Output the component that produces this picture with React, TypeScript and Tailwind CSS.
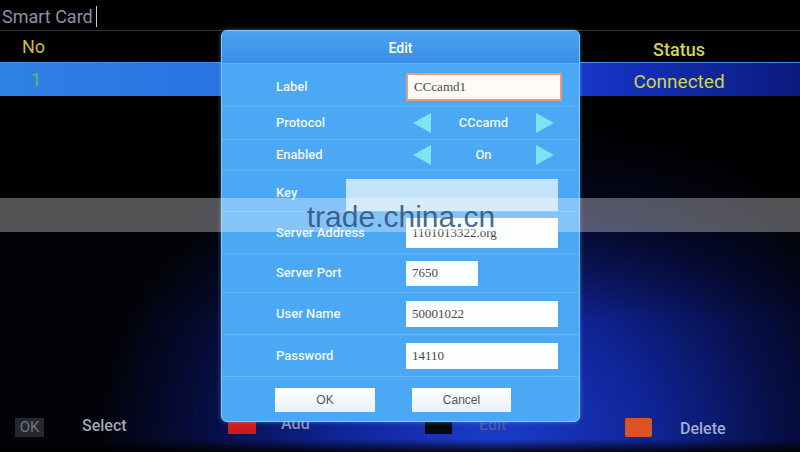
import React from "react";

function Field({ label, value, width = 152, height = 26, labelW = 130, rowH, focused = false }: { label: string; value?: string; width?: number; height?: number; labelW?: number; rowH: string; focused?: boolean }) {
  return (
    <div className={`flex items-center border-b border-[#66b7f7] pl-[54px] ${rowH}`}>
      <div className="shrink-0 text-[13px] font-medium text-[#eef6ff]" style={{ width: labelW }}>
        {label}
      </div>
      <div
        className={`flex items-center pl-[6px] font-['Liberation_Serif',serif] text-[13px] text-[#4a4a4a] ${
          focused ? "border-2 border-[#e99a78] bg-[#fffaf7]" : "bg-[#fbfdff]"
        }`}
        style={{ width, height }}
      >
        {value}
      </div>
    </div>
  );
}

function Spinner({ label, value, rowH }: { label: string; value: string; rowH: string }) {
  return (
    <div className={`flex items-center border-b border-[#66b7f7] pl-[54px] ${rowH}`}>
      <div className="w-[137px] shrink-0 text-[13px] font-medium text-[#eef6ff]">{label}</div>
      <div className="flex w-[141px] items-center justify-between">
        <svg width="18" height="20" viewBox="0 0 18 20">
          <polygon points="18,0 0,10 18,20" fill="#7fe3f3" />
        </svg>
        <span className="text-[13px] font-medium text-[#eef6ff]">{value}</span>
        <svg width="18" height="20" viewBox="0 0 18 20">
          <polygon points="0,0 18,10 0,20" fill="#7fe3f3" />
        </svg>
      </div>
    </div>
  );
}

export default function App() {
  return (
    <div className="relative h-[452px] w-[800px] overflow-hidden bg-[radial-gradient(ellipse_50%_80%_at_62%_100%,#1c3dce_0%,#0f2496_40%,#070e44_72%,#020308_100%)] font-['Roboto',sans-serif]">
      <div className="flex h-full flex-col">
        <div className="flex h-[30px] items-center bg-black pl-[2px] pt-[3px]">
          <span className="text-[18px] leading-none text-[#8a91a6]">Smart Card</span>
          <span className="ml-[3px] h-[21px] w-[1px] bg-[#c8ccd6]" />
        </div>
        <div className="h-[1px] bg-[#303036]" />
        <div className="flex h-[31px] items-center bg-black">
          <div className="w-[558px] pl-[22px] text-[18px] text-[#cbbd47]">No</div>
          <div className="flex-1 pt-[5px] text-center text-[18px] font-medium text-[#d6d152]">Status</div>
        </div>
        <div className="flex h-[34px] items-center border-t border-[#4d8ce8] bg-[linear-gradient(90deg,#2f81e5_0%,#2a72e2_28%,#1f52d5_58%,#1535c6_74%,#0c1a7c_100%)]">
          <div className="w-[558px] pl-[31px] text-[18px] text-[#5cc04c]">1</div>
          <div className="flex-1 pt-[6px] text-center text-[19px] text-[#cfd44e]">Connected</div>
        </div>
        <div className="flex-1 bg-[linear-gradient(180deg,#000_0%,rgba(0,0,0,0.6)_30%,rgba(0,0,0,0)_70%)]" />
        <div className="flex h-[24px] items-center">
          <div className="flex w-[228px] items-center">
            <div className="ml-[15px] flex h-[19px] w-[29px] items-center justify-center bg-[#27282e] text-[15px] text-[#6f7383]">OK</div>
            <span className="mb-[2px] ml-[38px] text-[16px] font-medium text-[#a1a7b8]">Select</span>
          </div>
          <div className="flex w-[197px] items-center">
            <div className="mb-[2px] h-[15px] w-[28px] bg-[#d01a1a]" />
            <span className="mb-[6px] ml-[25px] text-[16px] font-medium text-[#8c94ba]">Add</span>
          </div>
          <div className="flex w-[200px] items-center">
            <div className="h-[13px] w-[27px] bg-[#03080a]" />
            <span className="mb-[4px] ml-[27px] text-[16px] font-medium text-[#4a5aa2]">Edit</span>
          </div>
          <div className="flex items-center">
            <div className="h-[19px] w-[27px] rounded-[2px] bg-[#d95422]" />
            <span className="mt-[4px] ml-[28px] text-[16px] font-medium text-[#a3abd2]">Delete</span>
          </div>
        </div>
        <div className="h-[13px] bg-[linear-gradient(180deg,rgba(0,0,0,0)_0%,rgba(0,0,0,0.85)_100%)]" />
      </div>

      {/* Edit dialog */}
      <div className="absolute left-[221px] top-[30px] flex h-[392px] w-[359px] flex-col overflow-hidden rounded-[6px] border border-[#86c8fb] bg-[#4ba8f4] shadow-[0_0_4px_rgba(120,190,255,0.5)]">
        <div className="flex h-[33px] shrink-0 items-center justify-center border-b border-[#5eb0f5] bg-[linear-gradient(180deg,#4ca3f0_0%,#388de5_100%)] pt-[2px] text-[14px] font-medium text-white">
          Edit
        </div>
        <Field label="Label" value="CCcamd1" width={156} height={28} rowH="h-[43px] pt-[3px]" focused />
        <Spinner label="Protocol" value="CCcamd" rowH="h-[33px]" />
        <Spinner label="Enabled" value="On" rowH="h-[31px]" />
        <div className="flex h-[41px] items-end border-b border-[#66b7f7] pl-[54px]">
          <div className="w-[70px] shrink-0 self-center pt-[3px] text-[13px] font-medium text-[#eef6ff]">Key</div>
          <div className="h-[32px] w-[212px] bg-[#c3e3fb]" />
        </div>
        <Field label="Server Address" value="1101013322.org" height={30} rowH="h-[42px]" />
        <Field label="Server Port" value="7650" width={72} height={25} rowH="h-[39px]" />
        <Field label="User Name" value="50001022" rowH="h-[42px]" />
        <Field label="Password" value="14110" rowH="h-[42px]" />
        <div className="flex flex-1 items-start pl-[53px] pt-[11px] font-['Liberation_Sans',sans-serif] text-[12px] text-[#555]">
          <div className="flex h-[24px] w-[100px] items-center justify-center bg-[linear-gradient(180deg,#ffffff_0%,#eaf0f5_100%)]">OK</div>
          <div className="ml-[37px] flex h-[24px] w-[99px] items-center justify-center bg-[linear-gradient(180deg,#ffffff_0%,#eaf0f5_100%)]">Cancel</div>
        </div>
      </div>

      {/* watermark band */}
      <div className="absolute left-0 top-[198px] flex h-[34px] w-[800px] justify-center bg-white/[0.32] pt-[2px]">
        <span className="pl-[2px] font-['Liberation_Sans',sans-serif] text-[30px] leading-[34px] text-[#2c5080]/85">trade.china.cn</span>
      </div>
    </div>
  );
}
